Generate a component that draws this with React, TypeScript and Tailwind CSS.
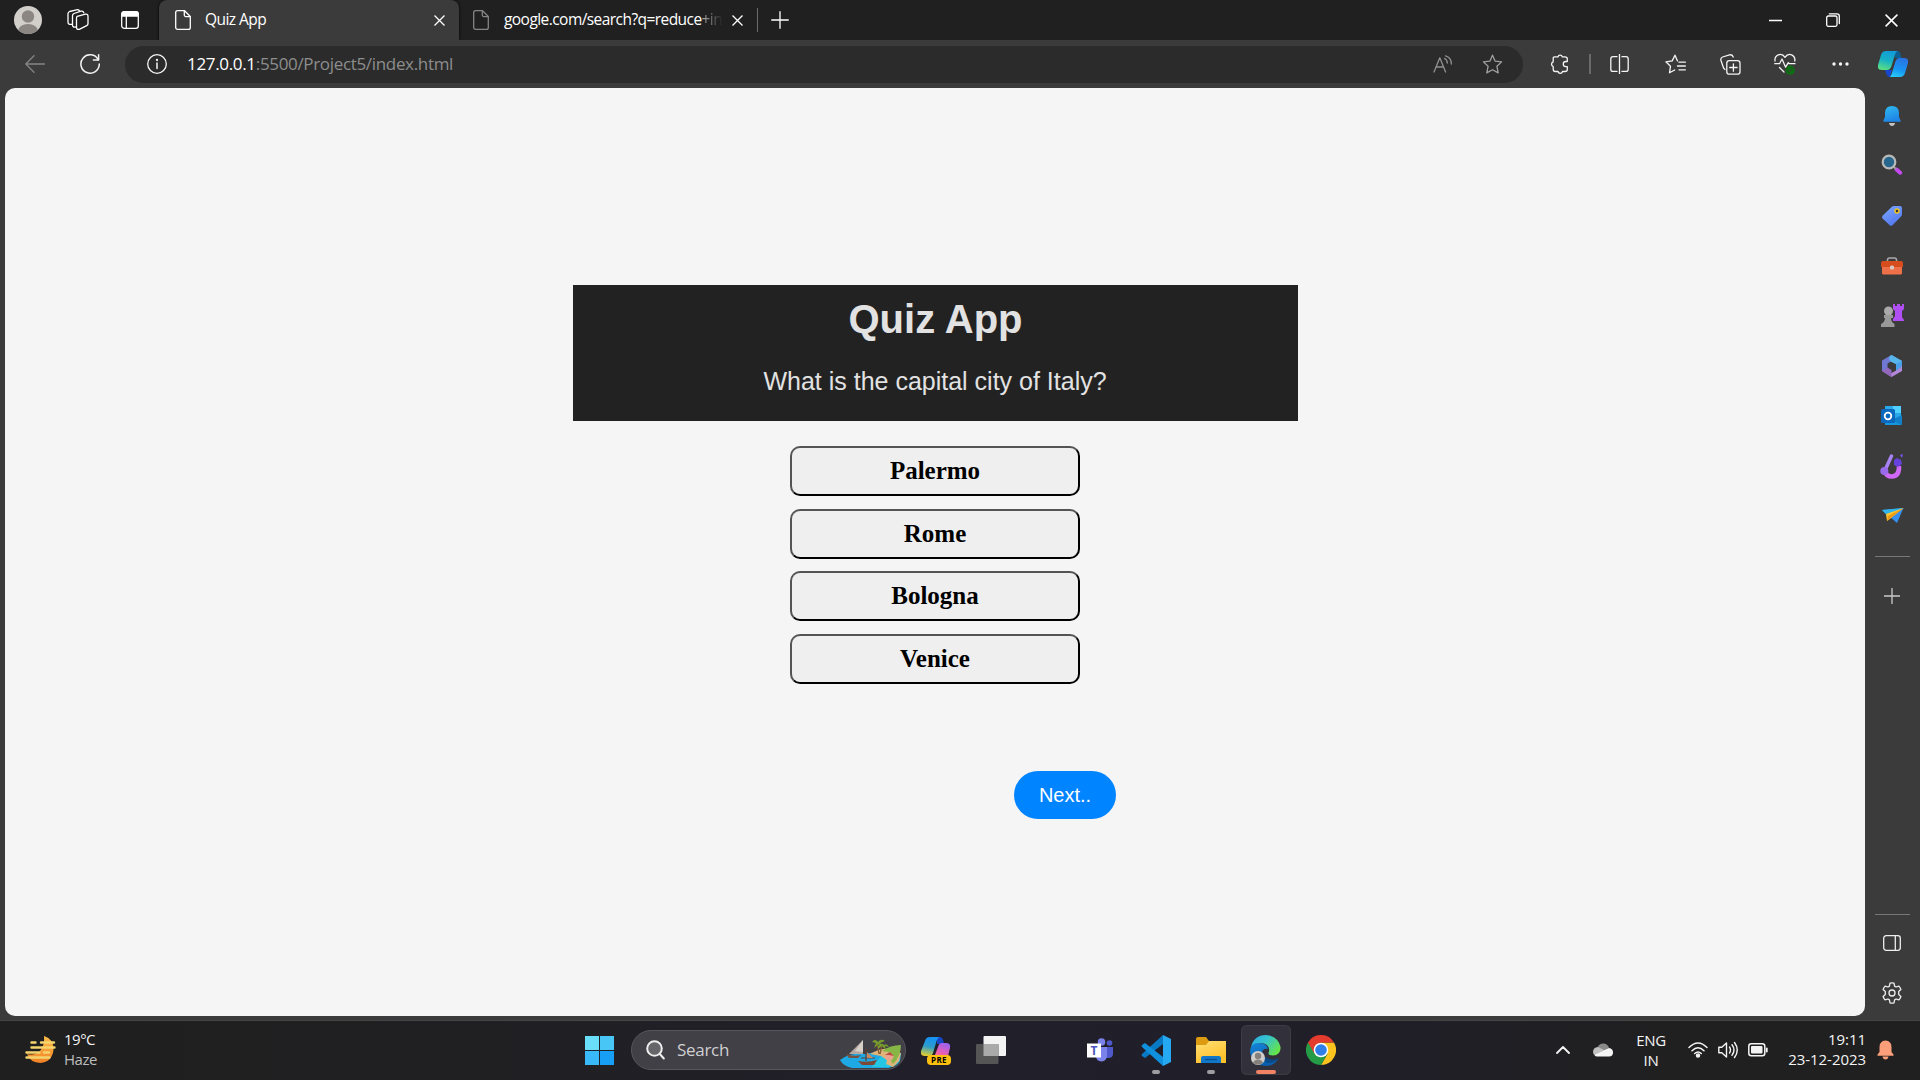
import React from "react";

type IconProps = { w: number; h: number; children: React.ReactNode; className?: string };

const Svg = ({ w, h, children, className = "" }: IconProps) => (
  <svg
    width={w}
    height={h}
    viewBox={`0 0 ${w} ${h}`}
    fill="none"
    stroke="currentColor"
    strokeWidth="1.3"
    strokeLinecap="round"
    strokeLinejoin="round"
    className={`block shrink-0 ${className}`}
  >
    {children}
  </svg>
);

const Cell = ({ className, children }: { className: string; children: React.ReactNode }) => (
  <div className={`flex shrink-0 items-center justify-center ${className}`}>{children}</div>
);

const PageIcon = ({ className = "" }) => (
  <Svg w={16} h={20} className={className}>
    <path d="M2.6.7h7l5.7 5.8v10.9a1.9 1.9 0 0 1-1.9 1.9H2.6A1.9 1.9 0 0 1 .7 17.400V2.600A1.900 1.900 0 0 1 2.600.7Z" />
    <path d="M9.300.9v4.200a1.500 1.500 0 0 0 1.500 1.500h4.300" />
  </Svg>
);

const CloseIcon = ({ size = 11 }: { size?: number }) => (
  <svg width={size} height={size} viewBox="0 0 11 11" className="block shrink-0" stroke="currentColor" strokeWidth="1.3">
    <path d="M.5.5l10 10M10.500.5l-10 10" />
  </svg>
);

function TabBar() {
  return (
    <div className="flex h-10 items-center bg-[#202020] text-white">
      <Cell className="w-14">
        <svg width="28" height="28" viewBox="0 0 28 28" className="block">
          <clipPath id="avatar"><circle cx="14" cy="14" r="14" /></clipPath>
          <g clipPath="url(#avatar)">
            <rect width="28" height="28" fill="#d2cfcb" />
            <circle cx="14" cy="10.500" r="6.200" fill="#8b8682" />
            <ellipse cx="14" cy="25" rx="10" ry="7" fill="#8b8682" />
          </g>
        </svg>
      </Cell>
      <Cell className="w-11">
        <Svg w={22} h={22}>
          <path d="M10.200 7.300 18.500 5.200Q21 4.700 21 7.200V14.500Q21 16 19.700 16.600L12.300 20.300Q9.500 21 9.500 18.200V9.400Q9.500 7.700 10.200 7.300Z" />
          <path d="M9 17.800Q5.500 18.800 5.500 16V6.600Q5.500 5.200 7 4.500L14 2.200Q16.200 1.700 16.800 3.800" />
          <path d="M5 15.300Q1 16 1 13.200V4.500Q1.200 3 2.600 2.500L9.500.8Q11.700.4 12.300 1.600" />
        </Svg>
      </Cell>
      <Cell className="w-[59px]">
        <Svg w={18} h={18}>
          <rect x=".7" y=".7" width="16.600" height="16.600" rx="2.600" />
          <path d="M1 2.500Q1 1 2.500 1h13Q17 1 17 2.500V5H1Z" fill="currentColor" />
          <path d="M5.300 5v12" />
        </Svg>
      </Cell>
      <div className="flex h-10 w-[300px] shrink-0 items-center rounded-t-lg bg-[#3b3b3b] pl-4 pr-[14px] shadow-[0_0_3px_#000]">
        <PageIcon />
        <span className="ml-[14px] flex-1 whitespace-nowrap text-[15.500px] tracking-[-0.55px]">Quiz App</span>
        <CloseIcon />
      </div>
      <div className="flex h-10 w-[298px] shrink-0 items-center pl-[14px] pr-[14px]">
        <PageIcon className="text-[#858585]" />
        <div className="ml-[15px] mr-[8px] flex-1 whitespace-nowrap text-[15.500px] tracking-[-0.56px]">
          google.com/search?q=reduce
          <span className="bg-[linear-gradient(to_right,#b0b0b0,#262626)] bg-clip-text text-transparent">+in</span>
        </div>
        <CloseIcon />
      </div>
      <div className="h-6 w-px bg-[#6b6b6b]" />
      <Cell className="w-[43px]">
        <Svg w={18} h={18}><path d="M9 .7v16.600M.7 9h16.600" /></Svg>
      </Cell>
      <div className="flex-1" />
      <Cell className="w-[57px]"><Svg w={13} h={11}><path d="M0 5.500h13" /></Svg></Cell>
      <Cell className="w-[58px]">
        <Svg w={14} h={14}>
          <rect x=".7" y="3" width="10.300" height="10.300" rx="1.500" />
          <path d="M3.300.8H11Q13.300.8 13.300 3v7.600" />
        </Svg>
      </Cell>
      <Cell className="w-[58px]"><CloseIcon size={13} /></Cell>
    </div>
  );
}

const STAR = "M10.500 1.200 13.200 7.200 19.600 7.900 14.900 12.300 16.200 18.900 10.500 15.700 4.800 18.900 6.100 12.300 1.400 7.900 7.800 7.200Z";

function Toolbar() {
  return (
    <div className="flex h-12 items-center bg-[#3b3b3b] text-[#f4f4f4]">
      <Cell className="w-[70px] text-[#858585]">
        <Svg w={20} h={18}><path d="M19.500 9H.8M9 .8.8 9 9 17.200" /></Svg>
      </Cell>
      <Cell className="w-10">
        <Svg w={20} h={20}>
          <path d="M18.200 5.600A9.200 9.200 0 1 0 19.300 10" strokeWidth="1.500" />
          <path d="M18.600.8v5.200h-5.200" strokeWidth="1.500" />
        </Svg>
      </Cell>
      <div className="ml-[15px] flex h-[37px] w-[1398px] shrink-0 items-center rounded-full bg-[#2b2b2b]">
        <Cell className="ml-[22px] w-5">
          <Svg w={20} h={20}>
            <circle cx="10" cy="10" r="9.300" />
            <path d="M10 9v5.500" strokeWidth="1.500" />
            <circle cx="10" cy="6" r=".5" fill="currentColor" />
          </Svg>
        </Cell>
        <div className="ml-5 flex-1 whitespace-nowrap text-[17px] tracking-[-0.33px] text-[#8d8d8d]">
          <span className="text-white">127.0.0.1</span>:5500/Project5/index.html
        </div>
        <Cell className="w-[49px] text-[#919191]">
          <Svg w={20} h={18}>
            <path d="M1 17 6.800 2.800 12.600 17M3 12h7.700M11.500 3.500Q14.200 4.600 14.300 8M12.500.8Q18.500 2.500 18.300 9" />
          </Svg>
        </Cell>
        <Cell className="mr-[6px] w-[50px] text-[#a0a0a0]"><Svg w={21} h={20}><path d={STAR} /></Svg></Cell>
      </div>
      <Cell className="w-[72px]">
        <Svg w={19} h={20}>
          <path d="M4.500 2.800H8A2.200 2.200 0 0 1 12.300 2.800H15Q17.300 2.800 17.300 5V7.500H15.800A2.500 2.500 0 0 0 15.800 12.600H17.300V15.500Q17.300 17.500 15 17.500H12.500A2.300 2.300 0 0 1 8 17.500H5.300Q3.200 17.500 3.200 15.300V12.500A2.500 2.500 0 0 1 3.200 7.800V4.500Q3.200 2.800 4.500 2.800Z" />
        </Svg>
      </Cell>
      <div className="-ml-[6px] h-5 w-[1.500px] bg-[#6a6a6a]" />
      <Cell className="w-[57px]">
        <Svg w={19} h={20}>
          <path d="M9.500.5v19M7 2.700H3Q.8 2.700.8 5v10.200q0 2.200 2.200 2.200h4M12 2.700h4q2.200 0 2.200 2.300v10.200q0 2.200-2.200 2.200h-4" />
        </Svg>
      </Cell>
      <Cell className="w-[55px]">
        <Svg w={21} h={20}>
          <path d="M12.500 6.900 10 1.200 7.200 6.900.9 7.800 5.500 12.200 4.500 18.800 9.700 16M14 8.200h6.400M12.500 12h7.900M14 15.800h6.400" />
        </Svg>
      </Cell>
      <Cell className="w-[55px]">
        <Svg w={21} h={21}>
          <rect x="6.800" y="6.700" width="13.200" height="13.500" rx="2.500" />
          <path d="M13.400 9.800v7.400M9.700 13.500h7.400M5 15.500Q3.500 14.500 3.200 13L.9 6.200Q.4 3.800 2.600 3L9.500.9Q12.500.2 13.200 3" />
        </Svg>
      </Cell>
      <Cell className="w-[55px]">
        <Svg w={22} h={22}>
          <path d="M1 8Q.4 3.500 4.300 1.800 8.500.4 11 4.300 13.500.4 17.700 1.800 21.500 3.500 20.800 8M.8 10.700h4.700L8 6l3.600 8.200 2.700-4.500 1 1H21M5.500 14.500 10 19" />
          <circle cx="16.200" cy="17.200" r="4.600" fill="#0b700f" stroke="none" />
          <path d="M14 17.300l1.500 1.500 2.800-3" stroke="#2d4f2d" />
        </Svg>
      </Cell>
      <Cell className="w-[55px]">
        <svg width="17" height="4" className="block" fill="currentColor">
          <circle cx="2" cy="2" r="1.700" /><circle cx="8.500" cy="2" r="1.700" /><circle cx="15" cy="2" r="1.700" />
        </svg>
      </Cell>
      <Cell className="w-[51px]">
        <svg width="30" height="28" viewBox="0 0 30 28" className="block">
          <defs>
            <linearGradient id="copA" x1=".6" y1="0" x2=".3" y2="1">
              <stop offset="0" stopColor="#129bd9" /><stop offset=".5" stopColor="#17b1c4" /><stop offset="1" stopColor="#5ce082" />
            </linearGradient>
            <linearGradient id="copB" x1=".6" y1="0" x2=".3" y2="1">
              <stop offset="0" stopColor="#2b73e3" /><stop offset=".6" stopColor="#1697f4" /><stop offset="1" stopColor="#27c9f8" />
            </linearGradient>
          </defs>
          <path d="M17 1h2.500q2 0 2.700 2l1.400 5H17Z" fill="#0b5f93" />
          <path d="M7 20h7l-2 7q-3 0-4-4Z" fill="#1747d0" />
          <path d="M8 1h11.500q-1.700.6-2.500 3.500L13.500 16q-1.300 4-4.500 4H4q-5 0-4-5L3 5q1.200-4 5-4Z" fill="url(#copA)" />
          <path d="M22 27H11.500q1.500-.7 2.300-3.500L17.300 12q1.200-4 4.200-4H26q5 0 4 5l-3 10q-1.200 4-5 4Z" fill="url(#copB)" />
        </svg>
      </Cell>
    </div>
  );
}

const sideIcons: React.ReactNode[] = [
  <svg width="22" height="22" viewBox="0 0 22 22">
    <defs><linearGradient id="bell" x2="0.400" y2="1"><stop stopColor="#31bdf0" /><stop offset="1" stopColor="#1e84e6" /></linearGradient></defs>
    <path d="M8 18h6q-.5 3-3 3t-3-3Z" fill="#c4c4c4" />
    <path d="M11 1q6.800 0 7 7v4l1.600 3.600q.4 1.200-.8 1.200H3.200q-1.200 0-.8-1.200L4 12V8q.2-7 7-7Z" fill="url(#bell)" />
  </svg>,
  <svg width="22" height="22" viewBox="0 0 22 22" className="mb-[3px]">
    <path d="m15.500 15.500 3.700 3.200" stroke="#c549f0" strokeWidth="4" strokeLinecap="round" />
    <path d="m12 12 3 3" stroke="#999" strokeWidth="2" />
    <circle cx="8" cy="8" r="6.300" fill="#28678d" stroke="#b9b9b9" strokeWidth="2.200" />
  </svg>,
  <svg width="22" height="22" viewBox="0 0 22 22">
    <defs><linearGradient id="tag" x2="0.600" y2="1"><stop stopColor="#7daaff" /><stop offset="1" stopColor="#5477ed" /></linearGradient></defs>
    <path d="M13 1h6q2 0 2 2v6.500q0 1-1 2l-8.500 8.700q-1.400 1.300-2.800 0L1.600 13.500q-1.300-1.300 0-2.700l9-8.800q1-1 2.400-1Z" fill="url(#tag)" />
    <circle cx="16" cy="6" r="2" fill="#333" stroke="#eec321" strokeWidth="1.500" />
  </svg>,
  <svg width="24" height="20" viewBox="0 0 24 20">
    <path d="M7.500 7V4q0-2 2-2h5q2 0 2 2v3" fill="none" stroke="#aaa" strokeWidth="1.500" />
    <rect x="2" y="6" width="20" height="12.500" rx="1.500" fill="#ee7048" />
    <path d="M1 7q0-2 2-2h18q2 0 2 2v4H1Z" fill="#d64d1d" />
    <rect x="10" y="9.500" width="4" height="4" rx="1.500" fill="#d4cbc6" />
  </svg>,
  <svg width="24" height="24" viewBox="0 0 24 24" className="mb-[2px]">
    <path d="M13 1h2v2h2V1h3v2h2V1h2v5l-2 2v6l2 3v1H13v-2l2-3V8l-2-2Z" fill="#b050f2" />
    <circle cx="8.500" cy="8" r="4.500" fill="#aaa" />
    <path d="M4 12h9v3h-2q0 4 3.500 6v3H1v-3q4-2 4-6H4Z" fill="#999" />
  </svg>,
  <svg width="22" height="24" viewBox="0 0 22 24">
    <path d="m10.500 1 10.500 6v9.500l-6 1.500v-8L7 6.200Q7 2.600 10.500 1Z" fill="#4b9fe6" />
    <path d="m10.500 1 10.500 6-6 3-8-3.800Q7 2.600 10.500 1Z" fill="#58b5ea" />
    <path d="M10.500 1 1 6.500v10.600l5.500.9V9.500L10 7.500Q5.500 4.500 10.500 1Z" fill="#6f78d2" />
    <path d="m1 17 9.500 6L21 17v-5.500q-1 2.500-4 4L10.500 19Z" fill="#b488d8" />
    <path d="M1 17l5.500-3.500 4 2.500v7Z" fill="#9168be" />
  </svg>,
  <svg width="22" height="22" viewBox="0 0 22 22">
    <path d="M4 1h16v15H4Z" fill="#29a9ea" /><path d="M12 1h8v7h-8Z" fill="#50d0ff" />
    <path d="M4 10 21 20H4Z" fill="#1597e0" /><path d="M21 10v10L10 15Z" fill="#127fca" />
    <rect x="0" y="4" width="14" height="14" rx="1.500" fill="#0c68bd" />
    <circle cx="7" cy="11" r="3.300" fill="none" stroke="#fff" strokeWidth="1.800" />
  </svg>,
  <svg width="24" height="26" viewBox="0 0 24 26" className="mb-px">
    <path d="M5 18q1 5.500 7 5.500Q19.500 23 19 13" fill="none" stroke="#cf69f5" strokeWidth="4.500" />
    <path d="M11.500 3 6 15" stroke="#a883f2" strokeWidth="3.500" strokeLinecap="round" />
    <circle cx="4.300" cy="18" r="4" fill="#9a6aec" />
    <path d="m14 7 3-2 4 2 1 4-4 3-4-2Z" fill="#6542db" /><path d="m20 2 3-1-1 4Z" fill="#7a55ea" />
  </svg>,
  <svg width="23" height="19" viewBox="0 0 23 19">
    <path d="M1 3 22.500 1 16 16 9 10Z" fill="#348ff0" />
    <path d="M1 3 22.500 1 6 8.500Z" fill="#2fb5ea" />
    <path d="M5 7 22.500 1 10 11 6 14Z" fill="#ffc52e" /><path d="m6 14 4-3 12.500-10L7 9Z" fill="#ee9c18" />
  </svg>,
];

const GearIcon = () => (
  <Svg w={22} h={22}>
    <circle cx="11" cy="11" r="3" />
    <path d="M9 1.200Q11 .7 13 1.200L13.600 4.100 15.100 5 17.900 4.100Q19.300 5.600 19.900 7.500L17.700 9.500V11.500 12.500L19.900 14.500Q19.300 16.400 17.900 17.900L15.100 17 13.600 17.900 13 20.800Q11 21.300 9 20.800L8.400 17.900 6.900 17 4.100 17.900Q2.700 16.400 2.100 14.500L4.300 12.500V9.500L2.100 7.500Q2.700 5.600 4.100 4.100L6.900 5 8.400 4.100Z" />
  </Svg>
);

function Sidebar() {
  return (
    <aside className="flex h-[932px] w-[55px] shrink-0 flex-col items-center pr-px text-[#eee]">
      <div className="mt-[3px] flex flex-col items-center">
        {sideIcons.map((icon, i) => (
          <Cell key={i} className="h-[50px] w-[54px]">{icon}</Cell>
        ))}
      </div>
      <div className="mt-[15px] h-px w-[35px] bg-[#777]" />
      <Cell className="mt-[31px] h-4 text-[#ccc]"><Svg w={16} h={16}><path d="M8 .5v15M.5 8h15" /></Svg></Cell>
      <div className="flex-1" />
      <div className="h-px w-[35px] bg-[#777]" />
      <Cell className="mt-[3px] h-[50px]">
        <Svg w={18} h={16}><rect x=".7" y=".7" width="16.600" height="14.600" rx="2.500" /><path d="M12.300 1v14" /></Svg>
      </Cell>
      <Cell className="mb-[2px] h-[50px]"><GearIcon /></Cell>
    </aside>
  );
}

const options = ["Palermo", "Rome", "Bologna", "Venice"];

function QuizPage() {
  return (
    <main className="ml-[5px] h-[928px] w-[1860px] shrink-0 rounded-[10px] bg-[#f5f5f5] pt-[197px]">
      <div className="ml-[568px] flex w-[725px] flex-col items-center">
        <header className="flex h-[136px] w-full flex-col items-center bg-[#222] font-['Liberation_Sans',Arial,sans-serif] text-[#e2e2e2]">
          <h1 className="mt-[11px] text-[40px] font-bold leading-[46px]">Quiz App</h1>
          <p className="mt-[25px] pr-px text-[25px] leading-[28px]">What is the capital city of Italy?</p>
        </header>
        <div className="mt-[25px] flex flex-col gap-[12.500px] pr-px">
          {options.map((o) => (
            <button
              key={o}
              className="h-[50px] w-[290px] rounded-[10px] border-2 border-b-black border-l-[#545454] border-r-black border-t-[#545454] bg-[#efefef] font-['Liberation_Serif','Times_New_Roman',serif] text-[25px] font-bold leading-[28px] text-black"
            >
              {o}
            </button>
          ))}
        </div>
        <button className="ml-[259px] mt-[87px] h-12 w-[102px] rounded-full bg-[#0084ff] font-['Liberation_Sans',Arial,sans-serif] text-[20px] text-white">
          Next..
        </button>
      </div>
    </main>
  );
}

const WeatherIcon = () => (
  <svg width="32" height="30" viewBox="0 0 32 30" className="block">
    <defs><linearGradient id="moon" y2="1" x2="0"><stop stopColor="#ffbd4a" /><stop offset="1" stopColor="#ef8125" /></linearGradient></defs>
    <path d="M19 1q10 3 9.500 14-1.500 12-13 13Q5 27.500 2 19q8 2 13-3 5-6 4-15Z" fill="url(#moon)" />
    <path d="M6.500 7.500h4M16 7.500h13M6.500 12.500h23M1.500 17.500h13M19 17.500h5M1.500 22.500h23" stroke="#f5d46d" strokeWidth="2.400" strokeLinecap="round" />
  </svg>
);

const IslandArt = () => (
  <svg width="64" height="31" viewBox="0 0 64 31" className="block">
    <path d="M1 23Q12 15 26 17q17-4 35 0l-3 9-8 5H13Q4 29 1 23Z" fill="#1ea8e4" />
    <path d="M32 30Q40 22 45 16h17l-1 8q-4 6-11 6Z" fill="#25c5e4" />
    <path d="M31 17q10-6 20-5l11 4-2 8-6 6-7-3 1-4-6-4Z" fill="#dfb47b" />
    <path d="M43 14q8-6 19-6 0 11-8 19l-3-5 3-4-5-3Z" fill="#86b646" />
    <path d="M10 17 24 3v14Z" fill="#b6a9a4" /><path d="M16 14 24 3v12Z" fill="#d8d1ca" />
    <path d="M7 17q8 3 15 1l-3 3H10Z" fill="#765441" />
    <path d="M19 24q10 2 19-1l-3 5H23Z" fill="#7c4934" />
    <path d="M27 11v13M22 21h14" stroke="#5d4234" strokeWidth="1.200" /><path d="m28 15 6 6h-6Z" fill="#c98560" />
    <path d="m38 6 2 11M43 8l-2 9" stroke="#895b2f" strokeWidth="1.300" />
    <path d="M33 5q3-4 6 0 3-4 7-1l-5 2 4 4-5-3-5 4 2-5Zm6 4q3-4 6-1 3-2 5 2l-4-1 1 4-4-4-4 3Z" fill="#769c2d" />
    <path d="m46 18 5-3 4 4-2 4h-6Z" fill="#e9a48d" /><path d="m46 18 5-3 4 4-5-1Z" fill="#b84d3d" />
  </svg>
);

const PreviewCopilot = () => (
  <div className="relative h-[29px] w-[30px]">
    <svg width="30" height="29" viewBox="0 0 30 29" className="block">
      <defs>
        <linearGradient id="preA" x1=".5" y2="1" x2=".3"><stop stopColor="#1592f5" /><stop offset=".5" stopColor="#2d9cca" /><stop offset="1" stopColor="#e5cf2e" /></linearGradient>
        <linearGradient id="preB" x1=".7" y2="1" x2=".3"><stop stopColor="#9a62ef" /><stop offset=".6" stopColor="#ed5fb2" /><stop offset="1" stopColor="#ff8067" /></linearGradient>
      </defs>
      <path d="M16 1h3q3 0 4 7h-7Z" fill="#1745c5" />
      <path d="M9 1h9q-2 2-3 6l-3 10q-1 3-4 3H4q-5 0-4-5L4 5q1-4 5-4Z" fill="url(#preA)" />
      <path d="M12 24 17 11q1-4 4-4h4q5 0 4 5l-3 12Z" fill="url(#preB)" />
    </svg>
    <span className="absolute left-[6px] top-[19px] flex h-[10px] w-[24px] items-center justify-center rounded-sm bg-[#fdc00f] text-[8px] font-bold leading-none tracking-[0.4px] text-black">PRE</span>
  </div>
);

const TeamsIcon = () => (
  <div className="relative h-6 w-[27px]">
    <svg width="27" height="24" viewBox="0 0 27 24" className="block">
      <circle cx="22.500" cy="5" r="2.800" fill="#5059c9" /><path d="M17 9h9v7q0 4-5 4h-4Z" fill="#5059c9" />
      <circle cx="14.500" cy="4" r="3.800" fill="#7b83eb" /><path d="M9 9h11v9q-.5 5-5.500 5.500Q9 23 9 18Z" fill="#7b83eb" />
      <rect y="5.500" width="14" height="14" fill="#fff" />
    </svg>
    <span className="absolute left-0 top-[5px] w-[14px] text-center text-[12px] font-bold leading-[15px] text-[#4b53bc]">T</span>
  </div>
);

const VsCodeIcon = () => (
  <svg width="30" height="31" viewBox="0 0 30 31" className="block">
    <path d="M22 0 30 4v23l-8 4Z" fill="#25a9f2" />
    <path d="M22 0v9L4 23 1 21q-1-1 0-2Z" fill="#0879c4" />
    <path d="M22 31v-9L4 8 1 10q-1 1 0 2Z" fill="#108fdd" />
  </svg>
);

const FolderIcon = () => (
  <svg width="30" height="28" viewBox="0 0 30 28" className="block">
    <defs><linearGradient id="folder" x2=".5" y2="1"><stop stopColor="#ffdf76" /><stop offset="1" stopColor="#ffc028" /></linearGradient></defs>
    <path d="M0 3q0-2 2-2h8l3 4h15q2 0 2 2v5H0Z" fill="#dc9b10" />
    <path d="M0 9h10l3-4h17v22H0Z" fill="url(#folder)" />
    <path d="M5 27v-5q0-2 2-2h16q2 0 2 2v5Z" fill="#1177c9" /><path d="M9 23.500h12" stroke="#08508e" strokeWidth="1.300" />
  </svg>
);

const EdgeIcon = () => (
  <svg width="31" height="31" viewBox="0 0 31 31" className="block">
    <defs>
      <linearGradient id="edgeTop" x2="1" y2=".6"><stop stopColor="#2aa7e8" /><stop offset=".5" stopColor="#36c4cc" /><stop offset="1" stopColor="#65e34b" /></linearGradient>
      <linearGradient id="edgeLow" x2=".4" y2="1"><stop stopColor="#1486da" /><stop offset="1" stopColor="#0b5cac" /></linearGradient>
    </defs>
    <path d="M1 12Q4 0 16 0q12 1 14.500 12 .5 8-7.500 8.500-6 0-4-4 1-6-5-8Q7 7 1 12Z" fill="url(#edgeTop)" />
    <path d="M0 16Q1 8 8 8q9 0 10 6-6-1-6 5 1 7 8 8 5 0 9-4-5 8-13 8Q1 30 0 16Z" fill="url(#edgeLow)" />
    <path d="M12 17q-2 5 2 9 7 5 15-3-7 3-12 0-5-2-5-6Z" fill="#0a4a87" />
    <circle cx="8" cy="23" r="7" fill="#d0cdca" /><circle cx="8" cy="21" r="3.200" fill="#85807c" /><path d="M3 28q1-3.500 5-3.500t5 3.500q-5 3.500-10 0Z" fill="#85807c" />
  </svg>
);

const ChromeIcon = () => (
  <svg width="30" height="30" viewBox="0 0 30 30" className="block">
    <path d="M15 7.500h13A15 15 0 0 1 15 30l6.500-11.300Z" fill="#fcc31e" />
    <path d="M2 7.500 15 15l6.500 3.700L15 30A15 15 0 0 1 2 7.500Z" fill="#259b46" />
    <path d="M2 7.500A15 15 0 0 1 28 7.500H15L8.500 18.700Z" fill="#e33b2e" />
    <circle cx="15" cy="15" r="7.300" fill="#fff" /><circle cx="15" cy="15" r="5.800" fill="#307fe9" />
  </svg>
);

function AppButton({ icon, state = "idle" }: { icon: React.ReactNode; state?: "idle" | "open" | "active" }) {
  return (
    <div className="flex w-[55px] shrink-0 justify-center">
      <div className={`relative flex h-[50px] w-[50px] items-center justify-center rounded-md ${state === "active" ? "bg-[#32313b] ring-1 ring-inset ring-[#3d3c45]" : ""}`}>
        {icon}
        {state === "open" && <span className="absolute bottom-[1px] left-[21px] h-1 w-2 rounded-full bg-[#9d9da1]" />}
        {state === "active" && <span className="absolute bottom-[1px] left-[15px] h-1 w-5 rounded-full bg-[#f18264]" />}
      </div>
    </div>
  );
}

function Taskbar() {
  return (
    <footer className="flex h-[60px] items-center border-t border-[#454545] bg-[linear-gradient(to_right,#1f1f1f_0%,#202022_22%,#211f2a_50%,#201f28_72%,#202020_88%)] pb-px text-[#f4f4f4]">
      <div className="flex w-[585px] shrink-0 items-center pl-[25px]">
        <WeatherIcon />
        <div className="mb-[3px] ml-[7px] text-[15px] leading-5 tracking-[-0.5px]">
          <div>19°C</div>
          <div className="text-[#bdbdbd]">Haze</div>
        </div>
      </div>
      <div className="grid h-[29px] w-[29px] shrink-0 grid-cols-2 gap-px">
        <div className="bg-[#69def8]" /><div className="bg-[#48c7f7]" />
        <div className="bg-[#3ab9f8]" /><div className="bg-[#179ff5]" />
      </div>
      <div className="ml-[17px] flex h-10 w-[275px] shrink-0 items-center rounded-full border border-[#57565c] bg-[#414046] pl-[14px]">
        <svg width="19" height="20" viewBox="0 0 19 20" fill="#66656a" stroke="#eee" strokeWidth="2" strokeLinecap="round">
          <circle cx="8.500" cy="8.500" r="7.300" /><path d="m13.800 14 4 4.500" />
        </svg>
        <span className="ml-3 flex-1 text-[17px] tracking-[-0.3px] text-[#d0cfd2]">Search</span>
        <div className="mr-[2px] mt-1"><IslandArt /></div>
      </div>
      <div className="ml-[15px]"><PreviewCopilot /></div>
      <svg width="30" height="28" viewBox="0 0 30 28" className="ml-[25px] shrink-0">
        <rect x="7.500" y="0" width="22.500" height="20" rx="1" fill="#f3f3f3" />
        <rect x="0" y="8" width="22.500" height="20" rx="1" fill="#555" />
        <rect x="7.500" y="8" width="15" height="12" fill="#aaa" />
      </svg>
      <div className="ml-[67px] flex">
        <AppButton icon={<TeamsIcon />} />
        <AppButton icon={<VsCodeIcon />} state="open" />
        <AppButton icon={<FolderIcon />} state="open" />
        <AppButton icon={<EdgeIcon />} state="active" />
        <AppButton icon={<ChromeIcon />} />
      </div>
      <div className="flex-1" />
      <Cell className="w-10"><Svg w={14} h={8}><path d="M1 7l6-6 6 6" strokeWidth="1.800" /></Svg></Cell>
      <Cell className="w-10">
        <svg width="20" height="14" viewBox="0 0 20 14">
          <path d="M4.500 4.500Q6.500 0 11 .5q4 .5 5 4.500L8 8Z" fill="#8a8a8a" />
          <path d="M0 9q0-4.500 5-5l6 3-9 5.500Q0 11.500 0 9Z" fill="#c0c0c0" />
          <path d="M1.500 12 11 7l5-2q4 .5 4 4.500T16 13.500H4q-1.500 0-2.500-1.500Z" fill="#f5f5f5" />
        </svg>
      </Cell>
      <div className="mb-px w-14 shrink-0 text-center text-[15px] leading-5 tracking-[-0.3px]"><div>ENG</div><div>IN</div></div>
      <Cell className="ml-1 w-[30px]">
        <Svg w={20} h={16}>
          <path d="M1 5.500Q10-3.500 19 5.500M4 8.700q6-6 12 0M6.700 11.500q3.300-3 6.600 0" strokeWidth="1.500" />
          <circle cx="10" cy="13.500" r="1.600" fill="currentColor" />
        </Svg>
      </Cell>
      <Cell className="w-[30px]">
        <Svg w={20} h={18}>
          <path d="M.8 6.200h3L8.500 2v14l-4.700-4.200h-3ZM11.500 6q2 3 0 6M14 3.800q4 5.200 0 10.400M16.500 1.500q5.500 7.500 0 15" strokeWidth="1.400" />
        </Svg>
      </Cell>
      <Cell className="w-[30px]">
        <Svg w={20} h={14}>
          <rect x=".8" y=".8" width="16" height="12" rx="2.500" strokeWidth="1.500" />
          <rect x="3" y="3" width="11.500" height="7.600" rx="1" fill="currentColor" stroke="none" />
          <path d="M18.800 5.500v3" strokeWidth="1.800" />
        </Svg>
      </Cell>
      <div className="mb-[3px] w-[93px] shrink-0 whitespace-nowrap text-right text-[15px] leading-5 tracking-[-0.05px]"><div>19:11</div><div>23-12-2023</div></div>
      <Cell className="mr-[26px] ml-[11px] w-[17px]">
        <svg width="17" height="20" viewBox="0 0 17 20" fill="#fb9e7a">
          <path d="M5.500 16.500h6q-.5 3-3 3t-3-3Z" /><path d="M8.500.5q6 .5 6 6.500v5l2 2.500v1.200H.5v-1.200l2-2.500V7q0-6 6-6.500Z" />
        </svg>
      </Cell>
    </footer>
  );
}

export default function App() {
  return (
    <div className="flex h-[1080px] w-[1920px] flex-col overflow-hidden bg-[#3b3b3b] font-['Open_Sans','Noto_Sans',sans-serif]">
      <TabBar />
      <Toolbar />
      <div className="flex h-[932px] shrink-0">
        <QuizPage />
        <Sidebar />
      </div>
      <Taskbar />
    </div>
  );
}
